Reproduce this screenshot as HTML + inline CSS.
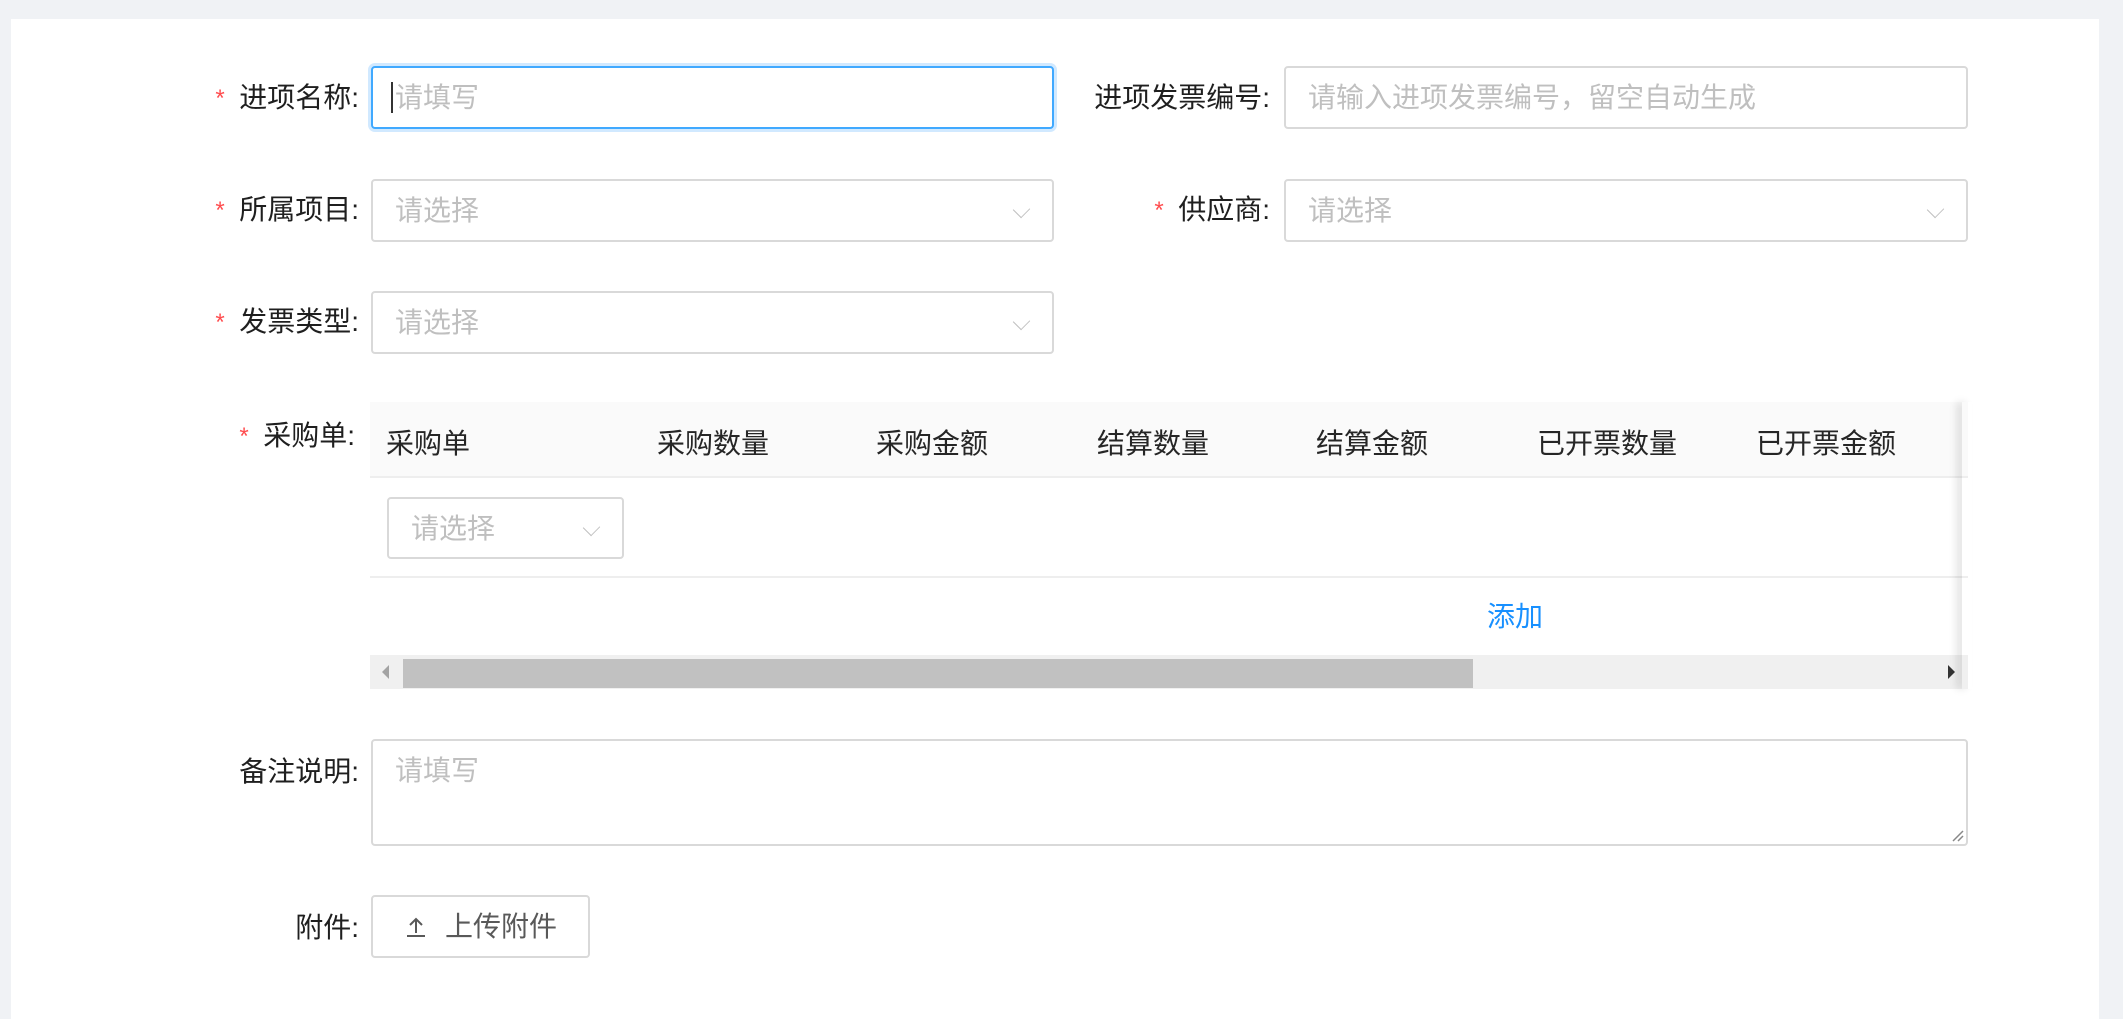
<!DOCTYPE html>
<html><head><meta charset="utf-8"><style>
*{box-sizing:border-box;margin:0;padding:0}
body{width:2123px;height:1015px;background:#f0f2f5;font-family:"Liberation Sans","Noto Sans CJK SC",sans-serif;font-size:28px;color:#262626;position:relative;overflow:hidden}
.card{position:absolute;left:11px;top:19px;width:2088px;height:1000px;background:#fff}
.a{position:absolute}
.lbl{position:absolute;text-align:right;white-space:nowrap;line-height:40px;color:#1f1f1f}
.lbl b{color:#ff4d4f;font-weight:normal;font-family:"Liberation Mono",monospace;font-size:24px;margin-right:12px}
.in{position:absolute;border:2px solid #d9d9d9;border-radius:4px;background:#fff;color:#bfbfbf;padding-left:22px;line-height:59px;white-space:nowrap}
.arr{position:absolute;right:24px;top:22px;width:13px;height:13px;border-right:1.5px solid #bfbfbf;border-bottom:1.5px solid #bfbfbf;transform:rotate(45deg) scaleX(0.9)}
.th{position:absolute;top:424px;line-height:40px;white-space:nowrap}
</style></head><body>
<div class="card"></div>

<div class="lbl" style="right:1764px;top:78px"><b>*</b>进项名称:</div>
<div class="in" style="left:371px;top:66px;width:683px;height:63px;border-color:#40a9ff;box-shadow:0 0 0 3px rgba(24,144,255,.2);color:#bfbfbf"><span style="border-left:2px solid #333;margin-left:-4px;padding-left:2px">请填写</span></div>
<div class="lbl" style="right:853px;top:78px">进项发票编号:</div>
<div class="in" style="left:1284px;top:66px;width:684px;height:63px">请输入进项发票编号，留空自动生成</div>

<div class="lbl" style="right:1764px;top:190px"><b>*</b>所属项目:</div>
<div class="in" style="left:371px;top:179px;width:683px;height:63px">请选择<span class="arr"></span></div>
<div class="lbl" style="right:853px;top:190px"><b>*</b>供应商:</div>
<div class="in" style="left:1284px;top:179px;width:684px;height:63px">请选择<span class="arr"></span></div>

<div class="lbl" style="right:1764px;top:302px"><b>*</b>发票类型:</div>
<div class="in" style="left:371px;top:291px;width:683px;height:63px">请选择<span class="arr"></span></div>

<div class="lbl" style="right:1768px;top:416px"><b>*</b>采购单:</div>
<div class="a" style="left:370px;top:402px;width:1598px;height:76px;background:#fafafa;border-bottom:2px solid #eee"></div>
<div class="th" style="left:386px">采购单</div>
<div class="th" style="left:657px">采购数量</div>
<div class="th" style="left:876px">采购金额</div>
<div class="th" style="left:1097px">结算数量</div>
<div class="th" style="left:1316px">结算金额</div>
<div class="th" style="left:1537px">已开票数量</div>
<div class="th" style="left:1756px">已开票金额</div>
<div class="a" style="left:370px;top:576px;width:1598px;height:2px;background:#eee"></div>
<div class="in" style="left:387px;top:497px;width:237px;height:62px">请选择<span class="arr"></span></div>
<div class="a" style="left:1487px;top:597px;color:#1890ff;line-height:40px">添加</div>
<div class="a" style="left:370px;top:655px;width:1598px;height:34px;background:#f0f0f0"></div>
<div class="a" style="left:403px;top:659px;width:1070px;height:29px;background:#c1c1c1"></div>
<div class="a" style="left:382px;top:665px;width:0;height:0;border-top:7px solid transparent;border-bottom:7px solid transparent;border-right:7px solid #a3a3a3"></div>
<div class="a" style="left:1948px;top:665px;width:0;height:0;border-top:7px solid transparent;border-bottom:7px solid transparent;border-left:7px solid #333"></div>
<div class="a" style="left:1962px;top:402px;width:10px;height:287px;box-shadow:-6px 0 8px rgba(0,0,0,.1);background:transparent"></div>

<div class="lbl" style="right:1764px;top:752px">备注说明:</div>
<div class="in" style="left:371px;top:739px;width:1597px;height:107px;line-height:40px;padding-top:10px">请填写
<svg class="a" style="right:2px;bottom:2px" width="14" height="14"><path d="M3 13L13 3M8 13L13 8" stroke="#888" stroke-width="1.5"/></svg></div>

<div class="lbl" style="right:1764px;top:908px">附件:</div>
<div class="a" style="left:371px;top:895px;width:219px;height:63px;border:2px solid #d9d9d9;border-radius:4px;color:#595959;line-height:59px;padding-left:32px;white-space:nowrap">
<svg style="vertical-align:-2px;margin-right:18px" width="22" height="22" viewBox="0 0 22 22"><path d="M11 17V3M5 9l6-6 6 6M2 20h18" fill="none" stroke="#595959" stroke-width="2"/></svg>上传附件</div>
</body></html>
